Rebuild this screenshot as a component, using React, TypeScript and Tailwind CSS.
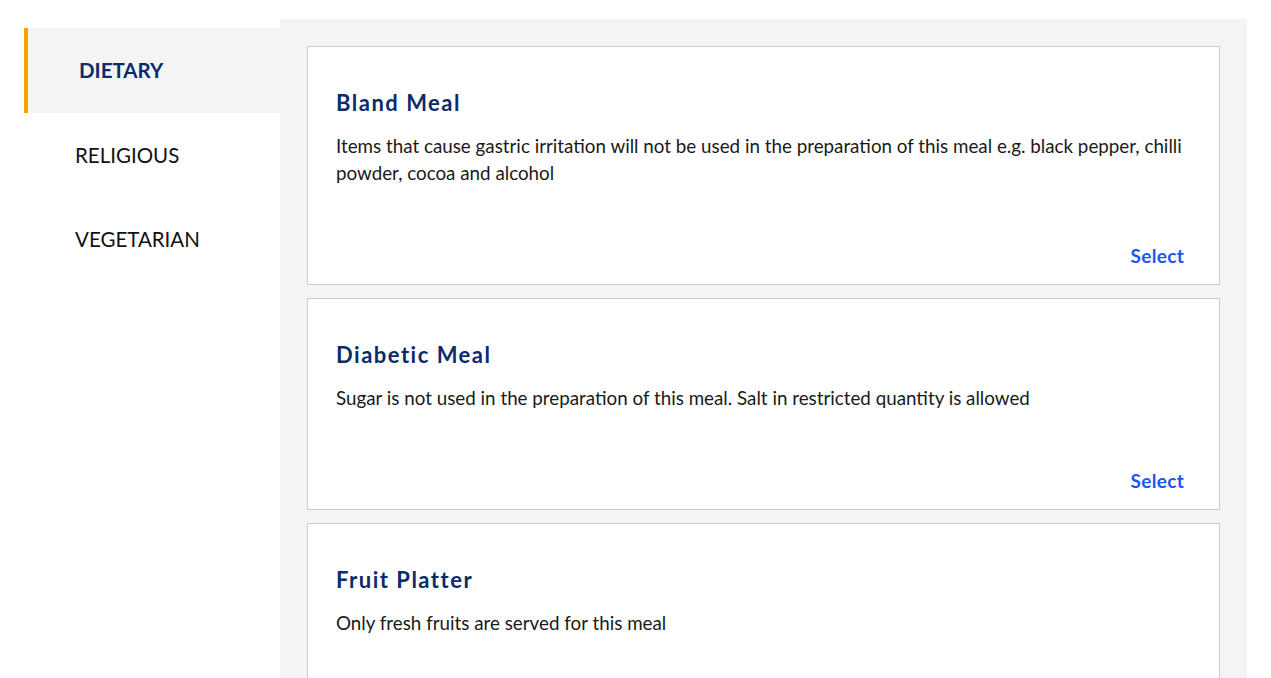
import React from "react";

const meals = [
  {
    title: "Bland Meal",
    desc: "Items that cause gastric irritation will not be used in the preparation of this meal e.g. black pepper, chilli powder, cocoa and alcohol",
  },
  {
    title: "Diabetic Meal",
    desc: "Sugar is not used in the preparation of this meal. Salt in restricted quantity is allowed",
  },
  {
    title: "Fruit Platter",
    desc: "Only fresh fruits are served for this meal",
  },
];

export default function App() {
  return (
    <div
      className="w-[1271px] h-[678px] overflow-hidden bg-white flex px-[24px] pt-[19px]"
      style={{ fontFamily: "Lato, 'Open Sans', sans-serif" }}
    >
      <div className="w-[256px] shrink-0 pt-[9px]">
        <div className="h-[85px] bg-[#f4f4f4] border-l-4 border-[#f7a100] flex items-center pl-[51px] text-[20.5px] font-bold text-[#0b2b6c]">
          DIETARY
        </div>
        <div className="h-[85px] flex items-center pl-[51px] text-[20.5px] text-[#111]">
          RELIGIOUS
        </div>
        <div className="h-[83px] flex items-center pl-[51px] text-[20.5px] text-[#111]">
          VEGETARIAN
        </div>
      </div>
      <div className="flex-1 bg-[#f4f4f4] px-[27px] pt-[27px] flex flex-col gap-[13px]">
        {meals.map((m) => (
          <div
            key={m.title}
            className="bg-white border border-[#cccccc] pl-[28px] pr-[35px] pt-[41px] pb-[15px] flex flex-col"
          >
            <div className="text-[22px] leading-[30px] font-bold text-[#0b2b6c] tracking-[1.5px]">
              {m.title}
            </div>
            <div className="mt-[14px] text-[18.8px] leading-[27px] text-[#1a1a1a]">
              {m.desc}
            </div>
            <div className="mt-[56px] flex justify-end">
              <span className="text-[19px] leading-[27px] font-bold text-[#1a55f5] tracking-[0.3px]">Select</span>
            </div>
          </div>
        ))}
      </div>
    </div>
  );
}
